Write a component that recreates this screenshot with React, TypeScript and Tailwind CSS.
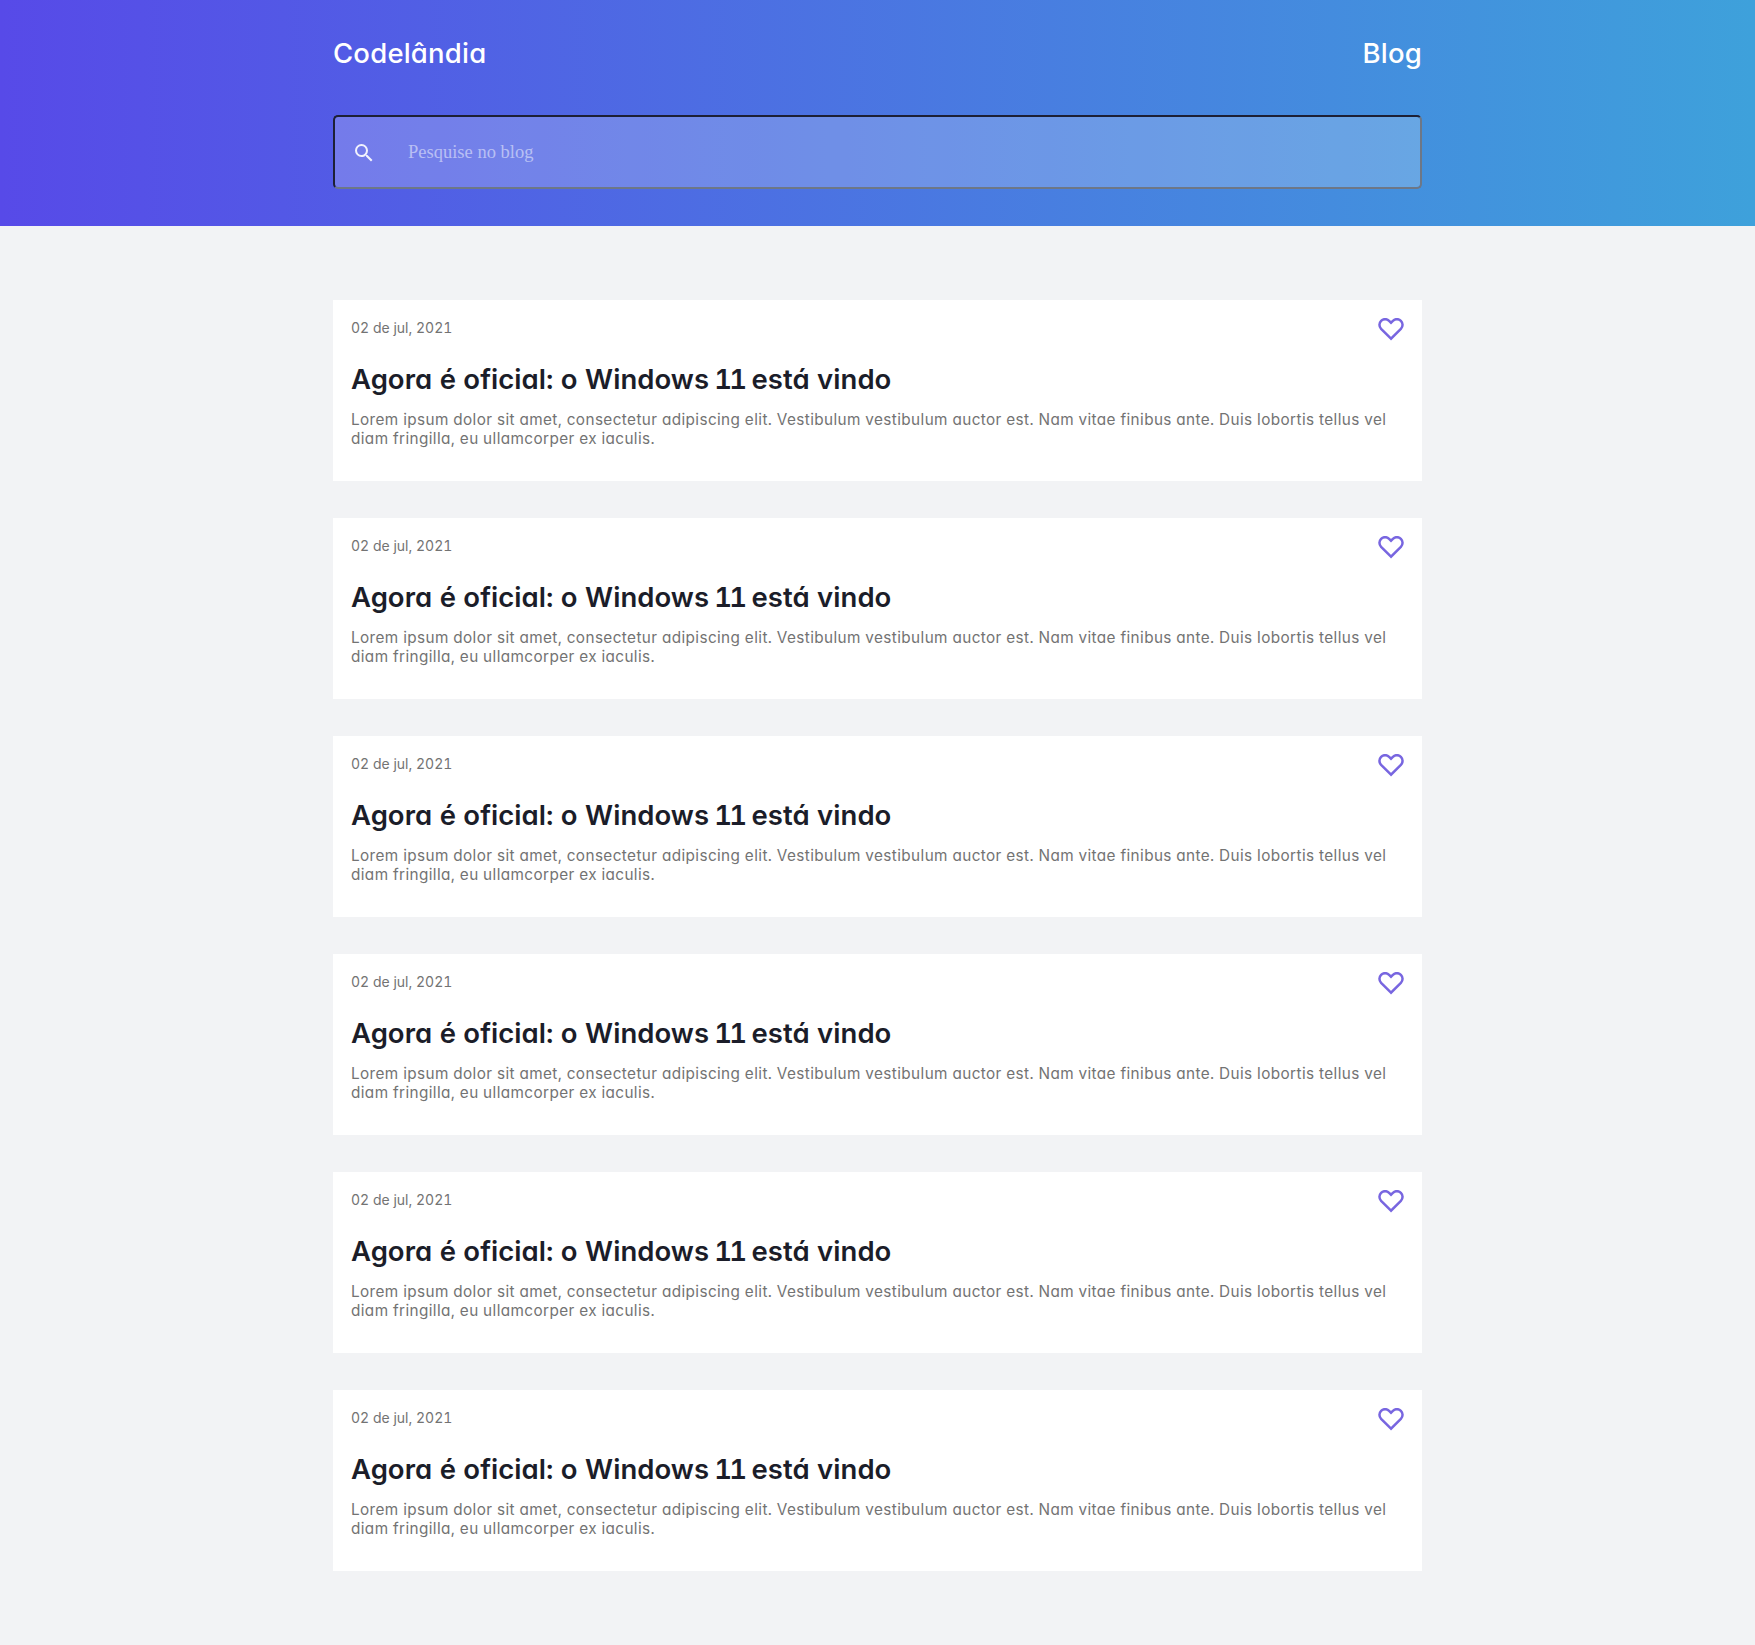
import { MdSearch } from "react-icons/md";

const posts = Array.from({ length: 6 }, (_, id) => ({
  id,
  date: "02 de jul, 2021",
  lines: [
    "Lorem ipsum dolor sit amet, consectetur adipiscing elit. Vestibulum vestibulum auctor est. Nam vitae finibus ante. Duis lobortis tellus vel",
    "diam fringilla, eu ullamcorper ex iaculis.",
  ],
}));

function HeartIcon() {
  return (
    <svg viewBox="0 0 26 23" className="mr-[0.5px] h-[23px] w-[26px] text-[#7866e0]" fill="none" stroke="currentColor" strokeWidth="2.5" strokeMiterlimit="10">
      <path d="M13 20.7 3.1 10.8A5.65 5.65 0 0 1 11.1 2.8L13 4.7 14.9 2.8A5.65 5.65 0 0 1 22.9 10.8Z" />
    </svg>
  );
}

function Header() {
  return (
    <header className="h-[226px] bg-[linear-gradient(90deg,#574ae8,#3ea1db)] pt-9">
      <div className="mx-auto w-[1089px]">
        <div className="flex justify-between text-[27.5px] leading-[34px] font-medium tracking-[0.2px] text-white">
          <h1>Codelândia</h1>
          <span>Blog</span>
        </div>
        <div className="mt-[45px] flex h-[74px] items-center rounded-[5px] border-2 border-t-[#1d2035] border-r-[#6d7787] border-b-[#6d7787] border-l-[#1d2035] bg-white/20 bg-clip-padding pt-0.5 pl-[17px]">
          <MdSearch className="size-6 text-white/90" />
          <input
            type="text"
            placeholder="Pesquise no blog"
            className="ml-8 w-[900px] bg-transparent font-['Liberation_Serif',serif] text-[18.5px] text-white outline-none placeholder:text-white/50"
          />
        </div>
      </div>
    </header>
  );
}

function PostCard({ post }: { post: (typeof posts)[number] }) {
  return (
    <article className="h-[181px] bg-white px-[18px] pt-[18px]">
      <div className="flex h-[44px] justify-between">
        <time className="pt-px text-[14px] leading-[18px] text-[#737373]">{post.date}</time>
        <HeartIcon />
      </div>
      <h2 className="text-[27.5px] leading-[34px] font-semibold tracking-[0.04px] text-[#1b1d29]">
        Agora é oficial: o Windows <span className="-ml-[2.4px] tracking-[-2.8px]">11</span> está vindo
      </h2>
      <p className="mt-[14px] text-[15.3px] leading-[19px] tracking-[0.4px] whitespace-nowrap text-[#737373]">
        {post.lines[0]}
        <br />
        {post.lines[1]}
      </p>
    </article>
  );
}

export default function App() {
  return (
    <div className="min-h-[1645px] bg-[#f2f3f5] font-['Inter',sans-serif] [font-feature-settings:'cv11','tnum']">
      <Header />
      <main className="mx-auto flex w-[1089px] flex-col gap-[37px] pt-[74px]">
        {posts.map((post) => (
          <PostCard key={post.id} post={post} />
        ))}
      </main>
    </div>
  );
}
